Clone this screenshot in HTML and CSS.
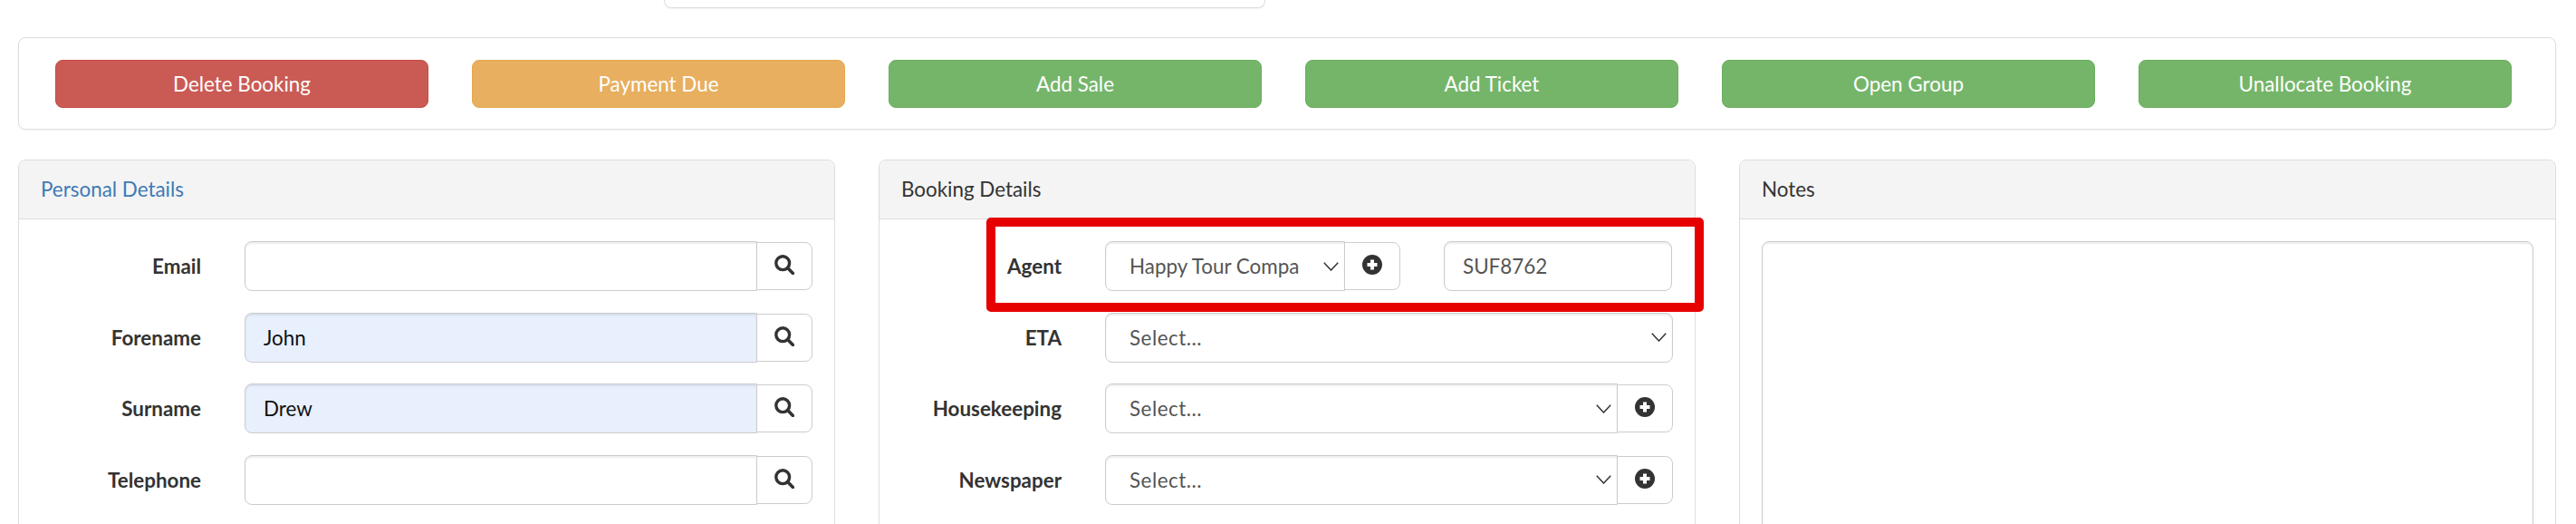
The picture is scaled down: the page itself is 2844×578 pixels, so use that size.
FILE: index.html
```html
<!DOCTYPE html>
<html lang="en">
<head>
<meta charset="utf-8">
<title>Booking</title>
<link rel="stylesheet" href="styles.css">
</head>
<body>
<svg class="sprites" width="0" height="0" aria-hidden="true">
  <symbol id="i-search" viewBox="0 0 22 22"><circle cx="9.2" cy="9.2" r="7.4" fill="none" stroke="currentColor" stroke-width="3.4"/><path d="M14.6 14.6 20.4 20.4" fill="none" stroke="currentColor" stroke-width="3.6" stroke-linecap="round"/></symbol>
  <symbol id="i-plus" viewBox="0 0 22 22"><circle cx="11" cy="11" r="11" fill="currentColor"/><path d="M11 5.5V16.500M5.500 11H16.500" fill="none" stroke="#fff" stroke-width="4"/></symbol>
  <symbol id="i-chev" viewBox="0 0 17 10"><path d="M.8.8 8.500 9 16.200.8" fill="none" stroke="currentColor" stroke-width="1.500"/></symbol>
</svg>
<div class="page">
  <div class="stub"></div>
  <div class="actions">
    <a class="btn btn-red">Delete Booking</a>
    <a class="btn btn-orange">Payment Due</a>
    <a class="btn btn-green">Add Sale</a>
    <a class="btn btn-green">Add Ticket</a>
    <a class="btn btn-green">Open Group</a>
    <a class="btn btn-green">Unallocate Booking</a>
  </div>
  <div class="columns">
    <section class="panel">
      <header class="panel-head head-link">Personal Details</header>
      <div class="panel-body">
        <div class="row"><label class="lbl">Email</label><div class="group"><div class="field grow"></div><div class="addon"><svg class="ico"><use href="#i-search"/></svg></div></div></div>
        <div class="row"><label class="lbl">Forename</label><div class="group"><div class="field grow filled">John</div><div class="addon"><svg class="ico"><use href="#i-search"/></svg></div></div></div>
        <div class="row"><label class="lbl">Surname</label><div class="group"><div class="field grow filled">Drew</div><div class="addon"><svg class="ico"><use href="#i-search"/></svg></div></div></div>
        <div class="row"><label class="lbl">Telephone</label><div class="group"><div class="field grow"></div><div class="addon"><svg class="ico"><use href="#i-search"/></svg></div></div></div>
      </div>
    </section>
    <section class="panel">
      <header class="panel-head">Booking Details</header>
      <div class="panel-body">
        <div class="row"><label class="lbl">Agent</label>
          <div class="group">
            <div class="field select agent-select"><span>Happy Tour Compa</span><svg class="chev"><use href="#i-chev"/></svg></div>
            <div class="addon"><svg class="ico"><use href="#i-plus"/></svg></div>
            <div class="field ref">SUF8762</div>
          </div>
        </div>
        <div class="row"><label class="lbl">ETA</label><div class="group"><div class="field select grow alone"><span class="placeholder">Select...</span><svg class="chev"><use href="#i-chev"/></svg></div></div></div>
        <div class="row"><label class="lbl">Housekeeping</label><div class="group"><div class="field select grow"><span class="placeholder">Select...</span><svg class="chev"><use href="#i-chev"/></svg></div><div class="addon"><svg class="ico"><use href="#i-plus"/></svg></div></div></div>
        <div class="row"><label class="lbl">Newspaper</label><div class="group"><div class="field select grow"><span class="placeholder">Select...</span><svg class="chev"><use href="#i-chev"/></svg></div><div class="addon"><svg class="ico"><use href="#i-plus"/></svg></div></div></div>
        <div class="highlight"></div>
      </div>
    </section>
    <section class="panel">
      <header class="panel-head">Notes</header>
      <div class="panel-body">
        <div class="notes"></div>
      </div>
    </section>
  </div>
</div>
</body>
</html>
```
FILE: styles.css
```css
* { box-sizing: border-box; }
html, body { margin: 0; height: 100%; overflow: hidden; background: #fff; }
body { font-family: Lato, "Open Sans", sans-serif; font-size: 22.4px; color: #333; }
.sprites { position: absolute; }
.page { padding: 0 22px 0 20px; }

.stub {
  height: 9px; width: 664px; margin-left: 713px;
  border: 1px solid #ddd; border-top: 0;
  border-radius: 0 0 8px 8px;
  box-shadow: 0 1px 2px rgba(0,0,0,.05);
}

.actions {
  display: grid; grid-template-columns: repeat(6, 1fr); gap: 48px;
  margin-top: 32px; padding: 24px 48px 23px 40px;
  border: 1px solid #ddd; border-radius: 8px;
  box-shadow: 0 1px 2px rgba(0,0,0,.05);
}
.btn {
  height: 53px; display: flex; align-items: center; justify-content: center;
  color: #fff; border-radius: 8px; border: 1px solid;
}
.btn-red { background: #ca5b54; border-color: #c54a42; }
.btn-orange { background: #e7af5f; border-color: #e5a74f; }
.btn-green { background: #75b56a; border-color: #6bae5f; }

.columns { display: grid; grid-template-columns: repeat(3, 1fr); gap: 48px; margin-top: 33px; }
.panel { border: 1px solid #ddd; border-radius: 8px 8px 0 0; height: 600px; }
.panel-head {
  height: 65px; padding: 0 24px 2px; display: flex; align-items: center;
  background: #f4f4f4; border-bottom: 1px solid #ddd; border-radius: 7px 7px 0 0;
}
.head-link { color: #3f7ab5; }
.panel-body { position: relative; padding: 24px; }

.row { display: flex; align-items: center; height: 55px; margin-bottom: 23.5px; }
.lbl { width: 177px; margin-right: 48px; flex: none; text-align: right; font-weight: 700; }
.group { flex: 1; display: flex; align-items: center; min-width: 0; }

.field {
  height: 55px; padding: 0 20px; display: flex; align-items: center;
  background: #fff; color: #555;
  border: 1px solid #ccc; border-right-width: 1px; border-radius: 8px 0 0 8px;
  box-shadow: inset 0 2px 2px rgba(0,0,0,.075);
  white-space: nowrap;
}
.grow { flex: 1; min-width: 0; }
.filled { background: #e8f0fe; color: #111; }
.select { position: relative; padding-left: 26px; }
.placeholder { letter-spacing: .5px; }
.alone { border-radius: 8px; }
.agent-select { width: 265px; overflow: hidden; }
.ref { width: 252px; margin-left: 48px; padding-left: 20px; border-radius: 8px; }
.chev { position: absolute; right: 6px; top: 50%; width: 17px; height: 10px; margin-top: -5px; color: #333; }

.addon {
  width: 62px; height: 53px; flex: none; margin-left: -1px;
  display: flex; align-items: center; justify-content: center;
  background: #fff; border: 1px solid #ccc; border-radius: 0 8px 8px 0; color: #333;
  padding-bottom: 3px;
}
.ico { width: 22px; height: 22px; display: block; }

.notes {
  height: 400px; border: 1px solid #ccc; border-radius: 8px;
  box-shadow: inset 0 2px 2px rgba(0,0,0,.075);
}

.highlight {
  position: absolute; left: 118px; top: -2px; right: -10px; height: 104px;
  border: 10px solid #e60000; border-radius: 5px;
}
```
